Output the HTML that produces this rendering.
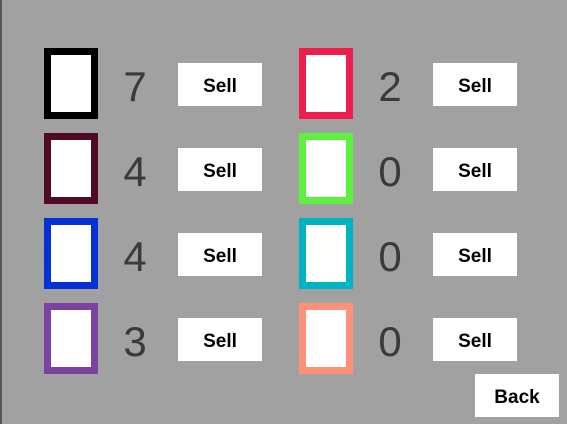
<!DOCTYPE html><html><head><style>
body{margin:0;width:567px;height:424px;background:#a1a1a1;position:relative;overflow:hidden;font-family:"Liberation Sans",sans-serif}
.edge{position:absolute;left:0;top:0;width:2px;height:424px;background:#555}
.b{position:absolute;width:40px;height:57px;background:#fff;border:7px solid}
.n{position:absolute;width:40px;text-align:center;font-size:42px;color:#3a3a3a;line-height:44px}
.s{position:absolute;width:84px;height:43px;background:#fff;color:#000;font-weight:bold;font-size:19px;line-height:47px;text-align:center}
</style></head><body><div class="edge"></div>
<div class="b" style="left:44px;top:48px;border-color:#000"></div><div class="n" style="left:115px;top:65px">7</div><div class="s" style="left:178px;top:63px">Sell</div>
<div class="b" style="left:44px;top:133px;border-color:#4f0a25"></div><div class="n" style="left:115px;top:150px">4</div><div class="s" style="left:178px;top:148px">Sell</div>
<div class="b" style="left:44px;top:218px;border-color:#0431d6"></div><div class="n" style="left:115px;top:235px">4</div><div class="s" style="left:178px;top:233px">Sell</div>
<div class="b" style="left:44px;top:303px;border-color:#7b42a2"></div><div class="n" style="left:115px;top:320px">3</div><div class="s" style="left:178px;top:318px">Sell</div>
<div class="b" style="left:299px;top:48px;border-color:#ee1e4c"></div><div class="n" style="left:370px;top:65px">2</div><div class="s" style="left:433px;top:63px">Sell</div>
<div class="b" style="left:299px;top:133px;border-color:#5ef03f"></div><div class="n" style="left:370px;top:150px">0</div><div class="s" style="left:433px;top:148px">Sell</div>
<div class="b" style="left:299px;top:218px;border-color:#00b3c3"></div><div class="n" style="left:370px;top:235px">0</div><div class="s" style="left:433px;top:233px">Sell</div>
<div class="b" style="left:299px;top:303px;border-color:#ff9079"></div><div class="n" style="left:370px;top:320px">0</div><div class="s" style="left:433px;top:318px">Sell</div>
<div class="s" style="left:475px;top:374px">Back</div>
</body></html>
